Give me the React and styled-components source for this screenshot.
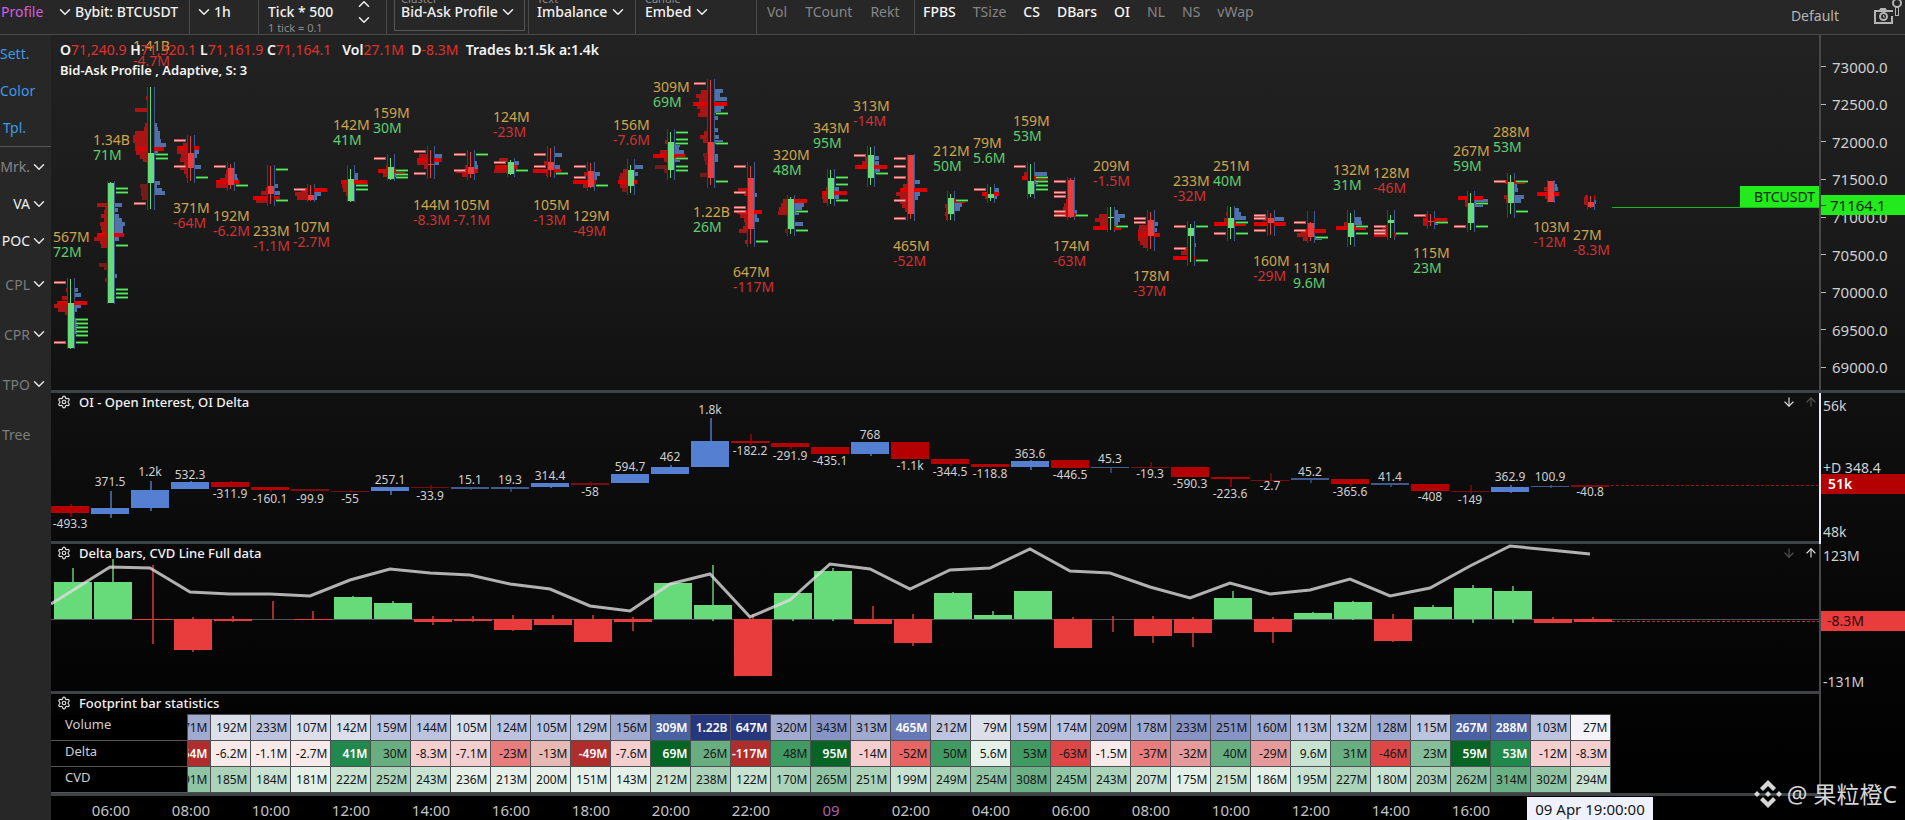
import React from "react";
import styled, { createGlobalStyle } from "styled-components";
import { ChevronDown, ChevronUp, Settings, ArrowDown, ArrowUp } from "lucide-react";

const GlobalStyle = createGlobalStyle`
  *, *::before, *::after { box-sizing: border-box; }
  body {
    margin: 0;
    background: #000;
    color: #e8e8e8;
    font-family: "Noto Sans", "Noto Sans CJK SC", sans-serif;
    font-size: 14px;
  }
  button, select, input { font: inherit; color: inherit; background: none; border: 0; padding: 0; margin: 0; }
  button, select { cursor: pointer; }
`;

const GREEN = "#67da79";
const RED = "#e93c3c";
const DEEP_RED = "#b50000";
const BLUE = "#557fd0";
const STEP = 40;
const cx = (i) => 20 + i * STEP;

/* ---------- data ---------- */

const VOLUME = "567M 1.34B 1.41B 371M 192M 233M 107M 142M 159M 144M 105M 124M 105M 129M 156M 309M 1.22B 647M 320M 343M 313M 465M 212M 79M 159M 174M 209M 178M 233M 251M 160M 113M 132M 128M 115M 267M 288M 103M 27M".split(" ");
const DELTA = "72M 71M -4.7M -64M -6.2M -1.1M -2.7M 41M 30M -8.3M -7.1M -23M -13M -49M -7.6M 69M 26M -117M 48M 95M -14M -52M 50M 5.6M 53M -63M -1.5M -37M -32M 40M -29M 9.6M 31M -46M 23M 59M 53M -12M -8.3M".split(" ");
const CVD = "191M 185M 184M 181M 222M 252M 243M 236M 213M 200M 151M 143M 212M 238M 122M 170M 265M 251M 199M 249M 254M 308M 245M 243M 207M 175M 215M 186M 195M 227M 180M 203M 262M 314M 302M 294M".split(" ");
const LABEL_Y = [237, 140, 46, 208, 216, 231, 227, 125, 113, 205, 205, 117, 205, 216, 125, 87, 212, 272, 155, 128, 106, 246, 151, 143, 121, 246, 166, 276, 181, 166, 261, 268, 170, 173, 253, 151, 132, 227, 235];

/* r: range, w: wick, b: body, up: rising, L/R: sell and buy rows, D: faded sell rows,
   poc: [y, left, right], p: sell imbalance, g: buy imbalance */
const CANDLES = [
  { r: [278, 349], w: [279, 349], b: [303, 348], up: 1, L: [[290, 2], [298, 6], [306, 14], [310, 10], [313, 3]], R: [[290, 3], [295, 6], [306, 6], [310, 2], [320, 2], [324, 3], [328, 2], [332, 2]], poc: [303, 14, 16], p: [283, 343], g: [320, 324, 328, 332, 336, 343] },
  { r: [181, 304], w: [182, 303], b: [183, 303], up: 1, L: [[205, 11], [209, 3], [212, 4], [216, 7], [220, 4], [224, 8], [228, 7], [232, 6], [239, 14], [242, 8], [246, 7]], D: [[265, 9], [268, 4], [280, 3]], R: [[205, 7], [210, 3], [216, 4], [220, 7], [224, 10], [228, 8], [231, 8], [239, 4], [276, 2]], poc: [235, 14, 13], p: [], g: [189, 193, 246, 290, 294, 298] },
  { r: [87, 210], w: [87, 209], b: [153, 183], up: 1, L: [[98, 2], [110, 13], [125, 3], [129, 4], [133, 13], [137, 15], [141, 15], [145, 13], [153, 12], [157, 8], [160, 5]], D: [[186, 8], [190, 7], [194, 7], [198, 6]], R: [[125, 2], [129, 3], [133, 5], [137, 5], [141, 6], [145, 11], [153, 3], [183, 5], [187, 2], [190, 7], [193, 10]], poc: [149, 16, 13], p: [204], g: [155, 159] },
  { r: [135, 183], w: [136, 181], b: [153, 168], L: [[145, 5], [152, 11], [156, 7], [160, 8], [164, 4], [168, 8], [172, 4], [176, 2]], R: [[152, 4], [156, 2], [167, 6]], poc: [148, 14, 8], p: [141, 167], g: [178] },
  { r: [162, 191], w: [164, 189], b: [168, 185], L: [[172, 2], [176, 3], [180, 8], [186, 12]], R: [[180, 3], [176, 2]], poc: [182, 15, 8], p: [167], g: [186] },
  { r: [165, 206], w: [166, 204], b: [186, 194], L: [[189, 2], [193, 7], [201, 12]], R: [[186, 3], [193, 5]], poc: [198, 18, 9], p: [], g: [170, 201] },
  { r: [184, 202], w: [185, 201], b: [195, 200], L: [[194, 13], [198, 11]], R: [[194, 6], [198, 2]], poc: [190, 10, 16], p: [190], g: [] },
  { r: [165, 202], w: [169, 202], b: [179, 201], up: 1, L: [[186, 6], [190, 5], [194, 2]], R: [[175, 3], [179, 3]], poc: [182, 10, 16], p: [], g: [186, 190] },
  { r: [154, 181], w: [158, 180], b: [167, 179], up: 1, L: [[175, 5], [167, 2]], R: [[175, 3]], poc: [171, 13, 14], p: [159], g: [171, 175, 178] },
  { r: [146, 179], w: [150, 178], b: [164, 165], L: [[156, 9], [163, 11], [167, 4]], R: [[156, 7], [163, 4]], poc: [160, 14, 11], p: [152, 174], g: [] },
  { r: [150, 180], w: [152, 178], b: [167, 174], L: [[175, 6], [167, 3]], R: [[167, 3], [163, 2]], poc: [171, 15, 7], p: [155, 171], g: [155] },
  { r: [158, 177], w: [160, 175], b: [162, 174], up: 1, L: [[160, 9], [171, 14]], R: [[163, 4]], poc: [167, 16, 6], p: [163], g: [171] },
  { r: [146, 178], w: [148, 177], b: [162, 170], L: [[163, 4], [174, 2]], R: [[155, 7], [167, 5]], poc: [171, 18, 10], p: [155, 167], g: [174] },
  { r: [162, 191], w: [163, 188], b: [171, 187], L: [[174, 4], [186, 5]], R: [[174, 5], [178, 2]], poc: [182, 18, 5], p: [167, 178], g: [186] },
  { r: [159, 195], w: [165, 193], b: [170, 186], up: 1, L: [[171, 5], [175, 8], [178, 9], [186, 8]], D: [[190, 6]], R: [[167, 8], [174, 3]], poc: [182, 13, 6], p: [], g: [] },
  { r: [129, 180], w: [132, 178], b: [142, 170], up: 1, L: [[142, 3], [152, 8], [160, 4]], D: [[167, 13], [171, 4]], R: [[145, 5], [148, 4], [152, 9], [160, 5]], poc: [156, 18, 14], p: [], g: [133, 140, 144, 159, 167, 171] },
  { r: [79, 188], w: [80, 185], b: [142, 178], L: [[92, 7], [96, 12], [100, 9], [107, 11], [111, 8], [115, 10], [133, 4], [137, 8], [141, 5]], D: [[155, 5], [159, 4], [163, 3], [175, 8]], R: [[91, 8], [95, 5], [99, 12], [107, 9], [111, 6], [118, 3], [130, 3], [137, 4], [142, 8], [156, 3], [160, 3]], poc: [104, 18, 16], p: [84], g: [114, 144, 182] },
  { r: [162, 247], w: [166, 244], b: [178, 229], L: [[190, 10], [194, 4], [216, 8], [220, 4], [224, 3], [228, 5], [231, 9], [242, 3]], R: [[195, 2], [220, 4], [216, 2]], poc: [212, 14, 11], p: [167, 193, 208, 212], g: [242] },
  { r: [195, 236], w: [197, 234], b: [199, 229], up: 1, L: [[201, 5], [205, 7], [209, 9], [213, 10]], D: [[231, 3]], R: [[205, 9], [209, 7], [213, 4], [224, 8]], poc: [201, 3, 16], p: [], g: [212, 231] },
  { r: [169, 206], w: [170, 204], b: [178, 199], up: 1, L: [[189, 2], [197, 6], [201, 5]], R: [[189, 4], [197, 4]], poc: [193, 9, 16], p: [], g: [178, 185, 201] },
  { r: [146, 187], w: [147, 185], b: [155, 178], up: 1, L: [[163, 6], [159, 3]], R: [[158, 4], [163, 4], [171, 5]], poc: [167, 16, 16], p: [156], g: [174] },
  { r: [154, 221], w: [155, 219], b: [155, 214], L: [[186, 5], [194, 12], [198, 8], [202, 8], [206, 6], [210, 3]], R: [[182, 5], [194, 5], [198, 3]], poc: [190, 11, 16], p: [159, 167, 178, 201, 219], g: [] },
  { r: [191, 221], w: [194, 220], b: [198, 214], up: 1, L: [[206, 3], [210, 2], [214, 3], [218, 2]], R: [[205, 7], [209, 5]], poc: [201, 3, 14], p: [], g: [201] },
  { r: [184, 203], w: [187, 201], b: [194, 198], up: 1, L: [[197, 3]], R: [[190, 4], [197, 2]], poc: [194, 9, 8], p: [190], g: [] },
  { r: [162, 199], w: [164, 197], b: [181, 194], up: 1, L: [[174, 4]], R: [[174, 12], [182, 3]], poc: [178, 9, 16], p: [167], g: [178, 182, 186, 190] },
  { r: [177, 220], w: [178, 218], b: [180, 217], L: [[201, 2], [205, 4], [209, 5], [213, 8]], R: [[212, 2]], poc: [215, 16, 5], p: [182, 193, 197, 212, 216], g: [216] },
  { r: [207, 232], w: [207, 230], b: [217, 218], up: 1, L: [[216, 9], [220, 13], [224, 8]], R: [[212, 3], [216, 10], [220, 5], [224, 3]], poc: [228, 18, 10], p: [], g: [227] },
  { r: [210, 251], w: [212, 249], b: [220, 236], L: [[227, 9], [231, 10], [235, 10], [239, 10], [243, 8], [246, 5]], R: [[224, 3], [230, 2]], poc: [235, 13, 9], p: [219, 223], g: [] },
  { r: [221, 266], w: [224, 262], b: [228, 236], up: 1, L: [[253, 7], [249, 4]], R: [[245, 1]], poc: [258, 18, 4], p: [227, 249], g: [227, 261] },
  { r: [206, 241], w: [207, 239], b: [218, 228], up: 1, L: [[220, 4], [214, 2]], R: [[210, 4], [214, 6], [218, 11]], poc: [224, 17, 15], p: [234], g: [223, 234] },
  { r: [210, 236], w: [213, 235], b: [218, 223], L: [[219, 5]], R: [[219, 9]], poc: [224, 17, 15], p: [216, 219, 231], g: [] },
  { r: [211, 243], w: [222, 241], b: [223, 237], L: [[235, 11], [239, 5]], R: [[238, 7]], poc: [231, 10, 15], p: [223, 231], g: [238] },
  { r: [210, 247], w: [213, 245], b: [223, 237], up: 1, L: [[224, 4]], R: [[219, 6], [223, 7]], poc: [228, 15, 15], p: [], g: [227, 234] },
  { r: [210, 240], w: [215, 238], b: [220, 223], up: 1, L: [[227, 6], [231, 6]], R: [], poc: [235, 17, 5], p: [227, 231, 234], g: [234] },
  { r: [211, 229], w: [214, 226], b: [221, 222], L: [[224, 5], [216, 2]], R: [[223, 3]], poc: [220, 8, 16], p: [216], g: [223] },
  { r: [191, 232], w: [193, 230], b: [203, 223], up: 1, L: [[201, 3], [205, 3]], R: [[201, 13], [205, 8]], poc: [198, 13, 12], p: [227], g: [204, 227] },
  { r: [173, 218], w: [175, 214], b: [182, 203], up: 1, L: [[197, 4], [201, 2]], R: [[186, 2], [190, 3], [197, 9], [201, 6]], poc: [182, 6, 14], p: [182], g: [182, 212] },
  { r: [180, 203], w: [181, 202], b: [181, 202], L: [[189, 4], [197, 3]], R: [[186, 2], [189, 3]], poc: [194, 14, 8], p: [], g: [] },
  { r: [195, 210], w: [196, 208], b: [202, 207], L: [[199, 4], [203, 4]], R: [[202, 1]], poc: [197, 6, 4], p: [], g: [] },
];

/* label, label y, body top, body bottom, wick top, wick bottom, tone */
const OI = [
  ["-493.3", 524, 506, 513, 504, 517, "r"], ["371.5", 482, 508, 514, 491, 518, "b"], ["1.2k", 472, 490, 508, 481, 511, "b"],
  ["532.3", 475, 482, 489, 481, 489, "b"], ["-311.9", 494, 482, 487, 481, 487, "r"], ["-160.1", 499, 487, 490, 487, 492, "r"],
  ["-99.9", 499, 489, 491, 489, 492, "dr"], ["-55", 499, 491, 492, 490, 492, "dr"], ["257.1", 480, 487, 491, 487, 495, "b"],
  ["-33.9", 496, 487, 488, 485, 490, "dr"], ["15.1", 480, 487, 489, 487, 490, "db"], ["19.3", 480, 487, 489, 487, 492, "db"],
  ["314.4", 476, 483, 487, 483, 488, "b"], ["-58", 492, 483, 485, 482, 486, "dr"], ["594.7", 467, 474, 483, 474, 483, "b"],
  ["462", 457, 467, 474, 465, 474, "b"], ["1.8k", 410, 441, 467, 418, 467, "b"], ["-182.2", 451, 441, 443, 434, 445, "r"],
  ["-291.9", 456, 443, 447, 443, 449, "r"], ["-435.1", 461, 447, 454, 447, 454, "r"], ["768", 435, 442, 454, 442, 456, "b"],
  ["-1.1k", 466, 442, 459, 442, 459, "r"], ["-344.5", 472, 459, 464, 459, 466, "r"], ["-118.8", 474, 464, 467, 464, 467, "r"],
  ["363.6", 454, 461, 467, 460, 470, "b"], ["-446.5", 475, 460, 468, 460, 468, "r"], ["45.3", 459, 467, 468, 467, 473, "db"],
  ["-19.3", 474, 467, 468, 462, 468, "dr"], ["-590.3", 484, 467, 477, 467, 477, "r"], ["-223.6", 494, 477, 479, 477, 487, "r"],
  ["-2.7", 486, 480, 481, 473, 481, "dr"], ["45.2", 472, 478, 480, 478, 483, "db"], ["-365.6", 492, 479, 484, 479, 486, "r"],
  ["41.4", 477, 483, 485, 483, 487, "db"], ["-408", 497, 484, 491, 484, 491, "r"], ["-149", 500, 491, 492, 485, 494, "dr"],
  ["362.9", 477, 487, 492, 485, 493, "b"], ["100.9", 477, 486, 487, 485, 488, "db"], ["-40.8", 492, 485, 487, 485, 487, "dr"],
];
const OI_TONE = { r: DEEP_RED, b: BLUE, dr: "#7d0d0d", db: "#3f5a8c" };

/* body edge away from the zero line, wick top, wick bottom */
const ZERO = 619;
const BARS = [
  [582, 568], [582, 559], [620, 565, 644], [650, 617, 652], [621, 616, 622], [619, 601, 619], [620, 611, 620], [597, 596], [603, 601],
  [622, 616, 625], [621, 616, 622], [630, 615, 631], [625, 615, 625], [642, 615, 642], [622, 617, 631], [583, 583], [605, 565, 621],
  [676, 614, 676], [593, 593, 621], [571, 568, 621], [624, 606, 624], [643, 614, 646], [593, 592], [615, 611], [591, 591],
  [648, 617, 648], [619, 616, 632], [636, 616, 643], [633, 617, 647], [598, 591], [632, 617, 643], [613, 612], [602, 601, 620],
  [641, 614, 642], [607, 605], [588, 585, 623], [591, 586, 623], [623, 617, 623], [622, 617, 622],
];
const CVD_LINE = [590, 567, 568, 592, 594, 594, 596, 580, 569, 573, 575, 584, 589, 606, 611, 584, 574, 617, 600, 564, 569, 589, 570, 568, 549, 571, 573, 587, 598, 583, 594, 590, 579, 596, 588, 566, 546, 550, 554];

const TIMES = ["06:00", "08:00", "10:00", "12:00", "14:00", "16:00", "18:00", "20:00", "22:00", "09", "02:00", "04:00", "06:00", "08:00", "10:00", "12:00", "14:00", "16:00"];
const PRICES = ["73000.0", "72500.0", "72000.0", "71500.0", "71000.0", "70500.0", "70000.0", "69500.0", "69000.0"];

/* ---------- shell ---------- */

const Page = styled.div`
  min-height: 100vh;
  display: flex;
  flex-direction: column;
  overflow-x: hidden;
`;

const Toolbar = styled.header`
  display: flex;
  height: 35px;
  overflow: hidden;
  background: #272727;
  border-bottom: 1px solid #4a4a4a;
`;

const Group = styled.div`
  display: flex;
  flex: none;
  align-items: flex-start;
  gap: ${(p) => p.$gap ?? 5}px;
  width: ${(p) => p.$w}px;
  padding: 3px 0 0 ${(p) => p.$pad ?? 9}px;
  border-right: 1px solid #4a4a4a;
  line-height: 18px;
  color: #f2f2f2;
`;

const Indicators = styled(Group)`
  flex: 1;
  width: auto;
  border-right: 0;
`;

const ToolButton = styled.button`
  display: flex;
  align-items: center;
  gap: 1px;
  color: ${(p) => p.$color || "inherit"};
  font-weight: ${(p) => (p.$on ? 500 : 400)};
  white-space: nowrap;
`;

const Profile = styled.a`
  width: 54px;
  color: #d35fe0;
  text-decoration: none;
`;

const Field = styled.label`
  display: flex;
  flex-direction: column;
  height: ${(p) => (p.$boxed ? 31 : 30)}px;
  width: ${(p) => (p.$boxed ? "131px" : "auto")};
  margin-top: -3px;
  padding-left: ${(p) => (p.$boxed ? 6 : 0)}px;
  border: ${(p) => (p.$boxed ? "1px solid #555" : "0")};
  border-top: 0;
`;

const Caption = styled.span`
  height: 10px;
  margin-top: -7px;
  line-height: 12px;
  font-size: 11px;
  color: #8c8c8c;
`;

const SelectRow = styled.span`
  display: flex;
  align-items: center;
  gap: 1px;
  height: 18px;
`;

const Select = styled.select`
  appearance: none;
  line-height: 18px;
  font-weight: 500;
`;

const TickField = styled.label`
  display: flex;
  flex-direction: column;
  width: 87px;
`;

const TickInput = styled.input`
  width: 80px;
  height: 18px;
  font-weight: 500;
`;

const TickNote = styled.span`
  font-size: 11px;
  line-height: 14px;
  color: #8c8c8c;
`;

const Stepper = styled.div`
  display: flex;
  flex-direction: column;
  margin-top: -8px;
  button { height: 16px; line-height: 0; }
`;

const Right = styled.div`
  display: flex;
  align-items: flex-start;
  margin-left: auto;
  padding-right: 2px;
  color: #b4b4b4;
`;

const DefaultButton = styled.button`
  margin: 4px 34px 0 0;
  line-height: 18px;
`;

const CaptureButton = styled.button`
  margin-top: -3px;
  line-height: 0;
`;

const Body = styled.div`
  flex: 1;
  display: flex;
  align-items: stretch;
`;

const Sidebar = styled.nav`
  flex: none;
  width: 51px;
  background: #272727;
  display: flex;
  flex-direction: column;
`;

const SideLinks = styled.div`
  display: flex;
  flex-direction: column;
  border-bottom: 1px solid #555;
  margin-bottom: 1px;
`;

const SideItem = styled.button`
  display: flex;
  align-items: center;
  justify-content: ${(p) => (p.$menu ? "flex-end" : "flex-start")};
  height: ${(p) => (p.$tall ? 50 : 37)}px;
  padding: 0 3px 0 ${(p) => p.$pad || 0}px;
  color: ${(p) => p.$color};
  svg { color: #e6e6e6; flex: none; }
`;

const Main = styled.main`
  flex: 1;
  min-width: 0;
  display: flex;
  flex-direction: column;
  background: linear-gradient(#222 0, #1a1a1a 200px, #0f0f0f 380px, #050505 620px, #000 760px);
`;

const Row = styled.section`
  display: grid;
  grid-template-columns: minmax(0, 1fr) 86px;
  flex: ${(p) => (p.$grow ? "1 0 auto" : "none")};
`;

const Pane = styled.div`
  position: relative;
  height: ${(p) => (p.$grow ? "100%" : "auto")};
  min-height: ${(p) => p.$h}px;
  border-bottom: 3px solid #3e4345;
  overflow: hidden;
`;

const Plot = styled.svg`
  position: absolute;
  inset: 0;
  width: 100%;
  height: 100%;
  font-size: ${(p) => p.$size}px;
`;

const Axis = styled.aside`
  position: relative;
  display: flex;
  flex-direction: column;
  justify-content: space-between;
  border-left: 2px solid ${(p) => (p.$active ? "#e8ebf5" : "#45494b")};
  border-bottom: ${(p) => (p.$line ? "3px solid #3e4345" : "0")};
  padding: ${(p) => p.$pad};
  font-size: 14px;
  line-height: 20px;
  color: #d0d0d0;
`;

const Tick = styled.div`
  flex: 1;
  display: flex;
  align-items: center;
  gap: 6px;
  font-size: 15px;
  &::before { content: ""; width: 5px; height: 1px; background: #b8b8b8; }
`;

const AxisTag = styled.div`
  position: absolute;
  left: 0;
  right: 0;
  top: ${(p) => p.$top}px;
  height: 20px;
  display: flex;
  align-items: center;
  gap: 4px;
  padding-left: ${(p) => p.$pad || 0}px;
  background: ${(p) => p.$bg};
  color: ${(p) => p.$color};
  font-weight: ${(p) => (p.$bold ? 600 : 400)};
  font-size: ${(p) => p.$size || 14}px;
  line-height: 20px;
`;

const TagTick = styled.span`
  width: 5px;
  height: 1px;
  background: #0a5a0a;
`;

const AxisNote = styled.div`
  position: absolute;
  left: 2px;
  top: 65px;
`;

const SymbolTag = styled.div`
  position: absolute;
  right: 0;
  top: 151px;
  width: 79px;
  height: 21px;
  padding-right: 4px;
  background: #22ea1c;
  color: #06280a;
  text-align: right;
  line-height: 22px;
`;

const Legend = styled.div`
  position: relative;
  padding: 5px 0 0 9px;
  line-height: 20px;
  color: #e13030;
`;

const LegendLine = styled.p`
  margin: 0;
  white-space: pre;
  font-size: ${(p) => p.$size || 14}px;
  b { font-weight: 600; color: #f4f4f4; }
`;

const PaneHead = styled.div`
  position: relative;
  display: flex;
  align-items: center;
  height: 20px;
  padding: 0 1px 2px 6px;
  gap: 8px;
`;

const PaneTitle = styled.h2`
  margin: 0;
  flex: 1;
  font-size: 13px;
  line-height: 18px;
  font-weight: 500;
  color: #f2f2f2;
`;

const IconButton = styled.button`
  display: flex;
  color: ${(p) => (p.$dim ? "#555" : "#e0e0e0")};
`;

const Stats = styled.table`
  width: 1559px;
  table-layout: fixed;
  border-collapse: collapse;
  font-size: 12px;
  line-height: 16px;
`;

const RowHead = styled.th`
  height: 26px;
  padding: 0 0 6px 14px;
  background: #000;
  border-bottom: 1px solid #555;
  text-align: left;
  font-size: 13px;
  font-weight: 400;
  color: #cfcfcf;
`;

const Cell = styled.td`
  height: 26px;
  padding: 0 2px 0 0;
  border: 1px solid #4c5052;
  background: ${(p) => p.$bg};
  color: ${(p) => (p.$strong ? "#fff" : "#161616")};
  font-weight: ${(p) => (p.$strong ? 600 : 400)};
  span { display: flex; justify-content: flex-end; overflow: hidden; }
`;

const TimeRow = styled.div`
  position: relative;
  height: 25px;
  padding-left: 20px;
  display: flex;
  font-size: 15px;
  line-height: 29px;
  background: #000;
`;

const Time = styled.span`
  flex: none;
  width: 80px;
  text-align: center;
  color: ${(p) => (p.$day ? "#a862a8" : "#c4c4c4")};
`;

const TimeTag = styled.div`
  position: absolute;
  left: 1476px;
  top: 1px;
  width: 126px;
  height: 24px;
  background: #eff2fd;
  color: #151515;
  text-align: center;
  line-height: 24px;
`;

const Watermark = styled.div`
  position: absolute;
  right: 8px;
  bottom: 11px;
  display: flex;
  align-items: center;
  gap: 5px;
  color: #d6d6d6;
  font-size: 23px;
  line-height: 32px;
  white-space: nowrap;
`;

/* ---------- charts ---------- */

function Candle({ d, i }) {
  const x = cx(i);
  const c = d.up ? GREEN : RED;
  return (
    <g>
      <rect x={x - 4} y={d.r[0]} width="1" height={d.r[1] - d.r[0]} fill="#8e2020" />
      <rect x={x + 3} y={d.r[0]} width="1" height={d.r[1] - d.r[0]} fill="#3c588c" />
      {d.L.map(([y, w], k) => <rect key={k} x={x - 3 - w} y={y - 2} width={w} height="4" fill="#a91515" />)}
      {(d.D || []).map(([y, w], k) => <rect key={k} x={x - 3 - w} y={y - 2} width={w} height="4" fill="#761a1a" />)}
      {d.R.map(([y, w], k) => <rect key={k} x={x + 4} y={y - 2} width={w} height="4" fill="#5071aa" />)}
      <rect x={x - d.poc[1]} y={d.poc[0] - 2} width={d.poc[1] - 3} height="4" fill="#dc0000" />
      <rect x={x + 3} y={d.poc[0] - 2} width={d.poc[2] - 3} height="4" fill="#dc0000" />
      {d.p.map((y) => (
        <g key={y}>
          <rect x={x - 17} y={y - 2} width="12" height="3" fill="#b65050" />
          <rect x={x - 17} y={y - 1} width="11" height="1" fill="#ffabab" />
        </g>
      ))}
      {d.g.map((y) => (
        <g key={y}>
          <rect x={x + 5} y={y - 2} width="12" height="3" fill="#267a2d" />
          <rect x={x + 5} y={y - 1} width="12" height="1" fill="#65e068" />
        </g>
      ))}
      <rect x={x - 1} y={d.w[0]} width="1" height={d.w[1] - d.w[0]} fill={c} />
      <rect x={x - 3} y={d.b[0]} width="6" height={d.b[1] - d.b[0]} fill={c} />
    </g>
  );
}

function PricePlot() {
  return (
    <Plot $size={14}>
      <g transform="translate(0 -35)">
        {CANDLES.map((d, i) => <Candle key={i} d={d} i={i} />)}
        {VOLUME.map((v, i) => (
          <g key={i}>
            <text x={cx(i) - 18} y={LABEL_Y[i] + 5} fill="#cfa64a">{v}</text>
            <text x={cx(i) - 18} y={LABEL_Y[i] + 20} fill={DELTA[i][0] === "-" ? "#d23232" : "#5fd070"}>{DELTA[i]}</text>
          </g>
        ))}
        <line x1="1561" x2="100%" y1="207.5" y2="207.5" stroke="#14b81a" />
      </g>
    </Plot>
  );
}

function OiPlot() {
  return (
    <Plot $size={12}>
      <g transform="translate(0 -393)">
        {OI.map(([label, ly, bt, bb, wt, wb, tone], i) => (
          <g key={i} fill={OI_TONE[tone]}>
            <rect x={cx(i) - 1} y={wt} width="2" height={wb - wt} opacity="0.7" />
            <rect x={cx(i) - 20} y={bt} width="38" height={bb - bt} />
            <text x={cx(i) - 1} y={ly + 4} textAnchor="middle" fill="#d0d0d0">{label}</text>
          </g>
        ))}
        <line x1="1560" x2="100%" y1="485.5" y2="485.5" stroke="#a01010" strokeDasharray="3 2" />
      </g>
    </Plot>
  );
}

function DeltaPlot() {
  const points = CVD_LINE.map((y, i) => (i === 0 ? "0,604" : `${cx(i) - 1},${y}`)).join(" ");
  return (
    <Plot $size={12}>
      <g transform="translate(0 -544)">
        <line x1="0" x2="100%" y1="619.5" y2="619.5" stroke="#505456" />
        {BARS.map(([edge, wt, wb = ZERO], i) => {
          const up = edge < ZERO;
          return (
            <g key={i} fill={up ? GREEN : RED}>
              <rect x={cx(i) + 1} y={wt} width="2" height={wb - wt} opacity="0.7" />
              <rect x={cx(i) - 17} y={Math.min(edge, ZERO)} width="38" height={Math.abs(edge - ZERO)} />
            </g>
          );
        })}
        <polyline points={points} fill="none" stroke="#dcdcdc" strokeOpacity="0.8" strokeWidth="3" />
        <line x1="1561" x2="100%" y1="621.5" y2="621.5" stroke="#b83030" strokeDasharray="3 2" />
      </g>
    </Plot>
  );
}

/* ---------- statistics table ---------- */

const VOL_SHADES = { 0: "#f3f3f8", 1: "#dcdee9", 2: "#bcc3de", 3: "#a0a9d0", 4: "#8693c4", 5: "#6679b6", 6: "#4a61a4", 7: "#263780" };
const VOL_TONE = "3 1 2 1 1 2 2 1 2 2 2 3 6 7 7 3 4 3 5 2 1 2 2 3 3 4 4 3 2 2 3 2 6 6 2 0".split(" ");
const DELTA_SHADES = {
  a: "#f9eaea", b: "#f4cfcf", c: "#e7b9b5", d: "#e59b9b", e: "#e87d7d", f: "#e66666", g: "#dc4848", h: "#b02d2d",
  m: "#e5f1e8", n: "#c8e3d2", o: "#86bd9a", p: "#68ae81", q: "#409a62", r: "#20894b", s: "#066524",
};
const DELTA_TONE = "h a a a r p b b e c h b s p h q s b f q m q g a e d p d n p g o s r b b".split(" ");
const CVD_SHADES = { 0: "#e5f1e8", 1: "#c8e3d2", 2: "#abd3ba", 3: "#8fc4a4", 4: "#6ab085" };
const CVD_TONE = "3 2 1 0 1 2 1 0 0 0 0 0 1 2 1 2 3 2 1 2 3 4 3 2 1 0 1 0 1 2 1 2 3 4 3 1".split(" ");

const ROWS = [
  { name: "Volume", values: VOLUME.slice(3), tones: VOL_TONE, shades: VOL_SHADES, strong: "567" },
  { name: "Delta", values: DELTA.slice(3), tones: DELTA_TONE, shades: DELTA_SHADES, strong: "hrs" },
  { name: "CVD", values: CVD, tones: CVD_TONE, shades: CVD_SHADES, strong: "" },
];

function StatsTable() {
  return (
    <Stats>
      <colgroup>
        <col style={{ width: 136 }} />
        <col style={{ width: 23 }} />
        {CVD.slice(1).map((_, i) => <col key={i} style={{ width: STEP }} />)}
      </colgroup>
      <tbody>
        {ROWS.map((row) => (
          <tr key={row.name}>
            <RowHead scope="row">{row.name}</RowHead>
            {row.values.map((v, i) => (
              <Cell key={i} $bg={row.shades[row.tones[i]]} $strong={row.strong.includes(row.tones[i])}><span>{v}</span></Cell>
            ))}
          </tr>
        ))}
      </tbody>
    </Stats>
  );
}

/* ---------- assembled parts ---------- */

const Chevron = () => <ChevronDown size={18} strokeWidth={2} aria-hidden="true" />;

function CaptureIcon() {
  return (
    <svg width="30" height="26" viewBox="0 0 30 26" fill="none" stroke="#b4b4b4" strokeWidth="2" aria-hidden="true">
      <path d="M20 11H2V23H19V16M7 10.500L8 9H12L13 10.500" />
      <circle cx="10.500" cy="16.500" r="3.500" />
      <path d="M10.500 15V17H12" strokeWidth="1" />
      <circle cx="24" cy="3" r="4" />
      <rect x="22.500" y="7.500" width="3" height="8" strokeWidth="1" />
    </svg>
  );
}

function Dropdown({ caption, value, boxed }) {
  return (
    <Field $boxed={boxed}>
      <Caption>{caption}</Caption>
      <SelectRow>
        <Select defaultValue={value}><option>{value}</option></Select>
        <Chevron />
      </SelectRow>
    </Field>
  );
}

function Head({ title, arrows }) {
  return (
    <PaneHead>
      <IconButton aria-label="Pane settings"><Settings size={14} strokeWidth={2} /></IconButton>
      <PaneTitle>{title}</PaneTitle>
      {arrows && (
        <>
          <IconButton aria-label="Move down" $dim={arrows === "up"}><ArrowDown size={14} strokeWidth={2} /></IconButton>
          <IconButton aria-label="Move up" $dim={arrows === "down"}><ArrowUp size={14} strokeWidth={2} /></IconButton>
        </>
      )}
    </PaneHead>
  );
}

const SIDE = [
  ["Mrk.", "#868686", 37], ["VA", "#f0f0f0", 37], ["POC", "#f0f0f0", 37],
  ["CPL", "#7c7c7c", 50], ["CPR", "#7c7c7c", 50], ["TPO", "#7c7c7c", 50],
];
const INDICATORS = [["FPBS", 1], ["TSize", 0], ["CS", 1], ["DBars", 1], ["OI", 1], ["NL", 0], ["NS", 0], ["vWap", 0]];

export default function App() {
  return (
    <Page>
      <GlobalStyle />
      <Toolbar>
        <Group $w={190} $pad={1} $gap={1}>
          <Profile href="#profile">Profile</Profile>
          <ToolButton $on><Chevron />Bybit: BTCUSDT</ToolButton>
        </Group>
        <Group $w={69} $pad={5}>
          <ToolButton $on><Chevron />1h</ToolButton>
        </Group>
        <Group $w={128} $gap={0}>
          <TickField>
            <TickInput defaultValue="Tick * 500" />
            <TickNote>1 tick = 0.1</TickNote>
          </TickField>
          <Stepper>
            <button aria-label="Increase"><ChevronUp size={18} /></button>
            <button aria-label="Decrease"><Chevron /></button>
          </Stepper>
        </Group>
        <Group $w={142} $pad={7}><Dropdown caption="Cluster" value="Bid-Ask Profile" boxed /></Group>
        <Group $w={107} $pad={8}><Dropdown caption="Text" value="Imbalance" /></Group>
        <Group $w={121}><Dropdown caption="Candle" value="Embed" /></Group>
        <Group $w={158} $gap={18} $pad={10}>
          <ToolButton $color="#868686">Vol</ToolButton>
          <ToolButton $color="#868686">TCount</ToolButton>
          <ToolButton $color="#868686">Rekt</ToolButton>
        </Group>
        <Indicators $gap={17} $pad={8}>
          {INDICATORS.map(([name, on]) => (
            <ToolButton key={name} $on={on} $color={on ? "#f6f6f6" : "#868686"}>{name}</ToolButton>
          ))}
          <Right>
            <DefaultButton>Default</DefaultButton>
            <CaptureButton aria-label="Screenshot"><CaptureIcon /></CaptureButton>
          </Right>
        </Indicators>
      </Toolbar>
      <Body>
        <Sidebar>
          <SideLinks>
            <SideItem $color="#3a9bea">Sett.</SideItem>
            <SideItem $color="#3a9bea">Color</SideItem>
            <SideItem $color="#3a9bea" $pad={3}>Tpl.</SideItem>
          </SideLinks>
          {SIDE.map(([name, color, h]) => (
            <SideItem key={name} $menu $color={color} $tall={h === 50}>{name}<Chevron /></SideItem>
          ))}
          <SideItem $color="#7c7c7c" $tall $pad={2}>Tree</SideItem>
        </Sidebar>
        <Main>
          <Row $grow>
            <Pane $grow $h={358}>
              <PricePlot />
              <Legend>
                <LegendLine><b>O</b>71,240.9 <b>H</b>71,320.1 <b>L</b>71,161.9 <b>C</b>71,164.1  <b> Vol</b>27.1M  <b>D</b>-8.3M  <b>Trades b:1.5k a:1.4k</b></LegendLine>
                <LegendLine $size={13}><b>Bid-Ask Profile , Adaptive, S: 3</b></LegendLine>
              </Legend>
              <SymbolTag>BTCUSDT</SymbolTag>
            </Pane>
            <Axis $line $pad="13px 0 4px 0">
              {PRICES.map((p) => <Tick key={p}>{p}</Tick>)}
              <AxisTag $top={160} $bg="#22ea1c" $color="#06280a" $size={15}><TagTick />71164.1</AxisTag>
            </Axis>
          </Row>
          <Row>
            <Pane $h={151}>
              <OiPlot />
              <Head title="OI - Open Interest, OI Delta" arrows="down" />
            </Pane>
            <Axis $active $pad="3px 0 2px 2px">
              <span>56k</span>
              <AxisNote>+D 348.4</AxisNote>
              <span>48k</span>
              <AxisTag $top={81} $bg={DEEP_RED} $color="#fff" $bold $pad={7}>51k</AxisTag>
            </Axis>
          </Row>
          <Row>
            <Pane $h={150}>
              <DeltaPlot />
              <Head title="Delta bars, CVD Line Full data" arrows="up" />
            </Pane>
            <Axis $pad="2px 0 2px 2px">
              <span>123M</span>
              <span>-131M</span>
              <AxisTag $top={67} $bg={RED} $color="#2a0505" $pad={6}>-8.3M</AxisTag>
            </Axis>
          </Row>
          <Row>
            <Pane $h={101}>
              <Head title="Footprint bar statistics" />
              <StatsTable />
            </Pane>
            <Axis $pad="0" />
          </Row>
          <TimeRow>
            {TIMES.map((t, i) => <Time key={i} $day={t === "09"}>{t}</Time>)}
            <TimeTag>09 Apr 19:00:00</TimeTag>
            <Watermark>
              <svg width="28" height="28" viewBox="0 0 28 28" fill="currentColor" aria-hidden="true">
                <path d="M14 0L22 8L19 11L14 6L9 11L6 8ZM14 28L6 20L9 17L14 22L19 17L22 20ZM14 11L17 14L14 17L11 14ZM3 11L6 14L3 17L0 14ZM25 11L28 14L25 17L22 14Z" />
              </svg>
              @ 果粒橙C
            </Watermark>
          </TimeRow>
        </Main>
      </Body>
    </Page>
  );
}
